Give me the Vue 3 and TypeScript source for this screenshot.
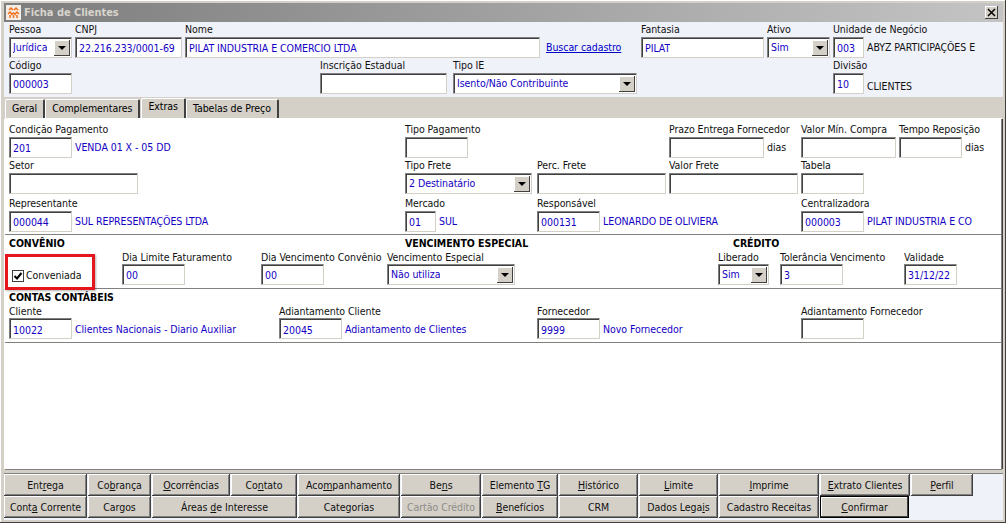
<script setup lang="ts">
interface Field { label?: string; w?: number; value?: string; combo?: boolean; note?: string; blue?: boolean; link?: boolean; low?: boolean; check?: boolean }
interface Row { cls: string; fields: Field[] }
interface Btn { a: string; u?: string; b?: string; off?: boolean; def?: boolean }

const headerRows: Row[] = [
  { cls: 'h1', fields: [
    { label: 'Pessoa', w: 63, value: 'Jurídica', combo: true },
    { label: 'CNPJ', w: 107, value: '22.216.233/0001-69' },
    { label: 'Nome', w: 355, value: 'PILAT INDUSTRIA E COMERCIO LTDA' },
    { note: 'Buscar cadastro', link: true },
    { label: 'Fantasia', w: 123, value: 'PILAT' },
    { label: 'Ativo', w: 63, value: 'Sim', combo: true },
    { label: 'Unidade de Negócio', w: 31, value: '003', note: 'ABYZ PARTICIPAÇÕES E' },
  ] },
  { cls: 'h2', fields: [
    { label: 'Código', w: 63, value: '000003' },
    { label: 'Inscrição Estadual', w: 127, value: '' },
    { label: 'Tipo IE', w: 184, value: 'Isento/Não Contribuinte', combo: true },
    { label: 'Divisão', w: 31, value: '10', note: 'CLIENTES', low: true },
  ] },
]

const rowsTop: Row[] = [
  { cls: 'p1', fields: [
    { label: 'Condição Pagamento', w: 63, value: '201', note: 'VENDA 01 X - 05 DD', blue: true },
    { label: 'Tipo Pagamento', w: 63, value: '' },
    { label: 'Prazo Entrega Fornecedor', w: 95, value: '', note: 'dias' },
    { label: 'Valor Mín. Compra', w: 95, value: '' },
    { label: 'Tempo Reposição', w: 63, value: '', note: 'dias' },
  ] },
  { cls: 'p2', fields: [
    { label: 'Setor', w: 129, value: '' },
    { label: 'Tipo Frete', w: 127, value: '2 Destinatário', combo: true },
    { label: 'Perc. Frete', w: 129, value: '' },
    { label: 'Valor Frete', w: 129, value: '' },
    { label: 'Tabela', w: 63, value: '' },
  ] },
  { cls: 'p3', fields: [
    { label: 'Representante', w: 63, value: '000044', note: 'SUL REPRESENTAÇÕES LTDA', blue: true },
    { label: 'Mercado', w: 31, value: '01', note: 'SUL', blue: true },
    { label: 'Responsável', w: 63, value: '000131', note: 'LEONARDO DE OLIVIERA', blue: true },
    { label: 'Centralizadora', w: 63, value: '000003', note: 'PILAT INDUSTRIA E CO', blue: true },
  ] },
]

const convenio: Row = { cls: 'p4', fields: [
  { check: true },
  { label: 'Dia Limite Faturamento', w: 63, value: '00' },
  { label: 'Dia Vencimento Convênio', w: 63, value: '00' },
  { label: 'Vencimento Especial', w: 128, value: 'Não utiliza', combo: true },
  { label: 'Liberado', w: 51, value: 'Sim', combo: true },
  { label: 'Tolerância Vencimento', w: 63, value: '3' },
  { label: 'Validade', w: 53, value: '31/12/22' },
] }

const contas: Row = { cls: 'p5', fields: [
  { label: 'Cliente', w: 63, value: '10022', note: 'Clientes Nacionais - Diario Auxiliar', blue: true },
  { label: 'Adiantamento Cliente', w: 63, value: '20045', note: 'Adiantamento de Clientes', blue: true },
  { label: 'Fornecedor', w: 63, value: '9999', note: 'Novo Fornecedor', blue: true },
  { label: 'Adiantamento Fornecedor', w: 63, value: '' },
] }

const panelRows: Row[][] = [rowsTop, [convenio], [contas]]

const tabs = ['Geral', 'Complementares', 'Extras', 'Tabelas de Preço']

const btn1: Btn[] = [
  { a: 'Ent', u: 'r', b: 'ega' }, { a: 'Co', u: 'b', b: 'rança' }, { a: '', u: 'O', b: 'corrências' },
  { a: 'Co', u: 'n', b: 'tato' }, { a: 'Aco', u: 'm', b: 'panhamento' }, { a: 'Be', u: 'n', b: 's' },
  { a: 'Elemento ', u: 'T', b: 'G' }, { a: '', u: 'H', b: 'istórico' }, { a: '', u: 'L', b: 'imite' },
  { a: '', u: 'I', b: 'mprime' }, { a: '', u: 'E', b: 'xtrato Clientes' }, { a: '', u: 'P', b: 'erfil' },
]
const btn2: Btn[] = [
  { a: 'Cont', u: 'a', b: ' Corrente' }, { a: 'Cargos' }, { a: 'Áreas ', u: 'd', b: 'e Interesse' },
  { a: 'Categorias' }, { a: 'Cartão Crédito', off: true }, { a: '', u: 'B', b: 'enefícios' },
  { a: 'CRM' }, { a: 'Dados Lega', u: 'i', b: 's' }, { a: 'Cadastro Receitas' },
  { a: '', u: 'C', b: 'onfirmar', def: true },
]
const btnRows: { cls: string; items: Btn[] }[] = [
  { cls: 'b1', items: btn1 },
  { cls: 'b2', items: btn2 },
]
</script>

<template>
  <div class="win">
    <div class="title">
      <svg class="logo" width="15" height="15" viewBox="0 0 15 15">
        <rect width="15" height="15" fill="#f4ede6" />
        <path d="M3 5l2-2 2 2M8 5l2-2 2 2M2 9l2-2 2 2M9 9l2-2 2 2M5 10l2.500-2 2.500 2M4 13v-3M7.500 13v-3M11 13v-3" fill="none" stroke="#f0701c" stroke-width="1.500" />
      </svg>
      <span class="title-text">Ficha de Clientes</span>
      <span class="close"><svg width="9" height="9" viewBox="0 0 9 9"><path d="M1 1l7 7M8 1l-7 7" stroke="#000" stroke-width="1.500" /></svg></span>
    </div>

    <div class="header">
      <div v-for="row in headerRows" :key="row.cls" class="row" :class="row.cls">
        <div v-for="(f, i) in row.fields" :key="i" class="field">
          <div class="label">{{ f.label || '&nbsp;' }}</div>
          <div class="line">
            <div v-if="f.w" class="ctl" :class="{ combo: f.combo }" :style="{ width: f.w + 'px' }">
              <span class="val">{{ f.value }}</span>
              <span v-if="f.combo" class="arrow"><i></i></span>
            </div>
            <span v-if="f.note" class="note" :class="{ link: f.link, low: f.low }">{{ f.note }}</span>
          </div>
        </div>
      </div>
    </div>

    <div class="tabs">
      <div v-for="t in tabs" :key="t" class="tab" :class="{ active: t === 'Extras' }">{{ t }}</div>
    </div>

    <div class="panel">
      <div class="section first">
        <div v-for="row in panelRows[0]" :key="row.cls" class="row" :class="row.cls">
          <div v-for="(f, i) in row.fields" :key="i" class="field">
            <div class="label">{{ f.label }}</div>
            <div class="line">
              <div class="ctl" :class="{ combo: f.combo }" :style="{ width: f.w + 'px' }">
                <span class="val">{{ f.value }}</span>
                <span v-if="f.combo" class="arrow"><i></i></span>
              </div>
              <span v-if="f.note" class="note" :class="{ blue: f.blue }">{{ f.note }}</span>
            </div>
          </div>
        </div>
      </div>
      <div class="rule tight"></div>

      <div class="section">
        <div class="heads">
          <b>CONVÊNIO</b>
          <b>VENCIMENTO ESPECIAL</b>
          <b>CRÉDITO</b>
        </div>
        <div v-for="row in panelRows[1]" :key="row.cls" class="row" :class="row.cls">
          <div v-for="(f, i) in row.fields" :key="i" class="field">
            <template v-if="f.check">
              <div class="redbox"></div>
              <div class="label">&nbsp;</div>
              <label class="check">
                <svg width="12" height="12" viewBox="0 0 12 12">
                  <rect x="0.500" y="0.500" width="11" height="11" fill="#fff" stroke="#404040" />
                  <path d="M2.500 6l2.500 2.500 4.500-5.500" fill="none" stroke="#000" stroke-width="2" />
                </svg>
                <span>Conveniada</span>
              </label>
            </template>
            <template v-else>
              <div class="label">{{ f.label }}</div>
              <div class="line">
                <div class="ctl" :class="{ combo: f.combo }" :style="{ width: f.w + 'px' }">
                  <span class="val">{{ f.value }}</span>
                  <span v-if="f.combo" class="arrow"><i></i></span>
                </div>
              </div>
            </template>
          </div>
        </div>
      </div>
      <div class="rule"></div>

      <div class="section">
        <div class="heads single"><b>CONTAS CONTÁBEIS</b></div>
        <div v-for="row in panelRows[2]" :key="row.cls" class="row" :class="row.cls">
          <div v-for="(f, i) in row.fields" :key="i" class="field">
            <div class="label">{{ f.label }}</div>
            <div class="line">
              <div class="ctl" :style="{ width: f.w + 'px' }">
                <span class="val">{{ f.value }}</span>
              </div>
              <span v-if="f.note" class="note" :class="{ blue: f.blue }">{{ f.note }}</span>
            </div>
          </div>
        </div>
      </div>
      <div class="rule"></div>
    </div>

    <div class="buttons">
      <div v-for="r in btnRows" :key="r.cls" class="btn-row" :class="r.cls">
        <div v-for="(b, i) in r.items" :key="i" class="btn" :class="{ off: b.off, def: b.def }">
          <span>{{ b.a }}<u v-if="b.u">{{ b.u }}</u>{{ b.b }}</span>
        </div>
      </div>
    </div>
  </div>
</template>

<style>
html, body { margin: 0; background: #d4d0c8; overflow: hidden; }
</style>

<style scoped>
.win {
  box-sizing: border-box;
  width: 1006px;
  height: 523px;
  display: flex;
  flex-direction: column;
  padding: 3px 3px 3px 4px;
  background: #d4d0c8;
  box-shadow: inset -1px -1px #404040, inset 1px 1px #fff;
  font: 10.5px/13px "DejaVu Sans Condensed", "DejaVu Sans", sans-serif;
  letter-spacing: -0.05px;
  color: #000;
}
.title {
  height: 19px;
  flex: none;
  display: flex;
  align-items: center;
  gap: 3px;
  padding: 0 5px 0 2px;
  background: linear-gradient(90deg, #7d7d7d, #c4c4c4);
}
.title-text {
  font-weight: 700;
  font-size: 11px;
  color: #d8d4cc;
}
.close {
  margin-left: auto;
  box-sizing: border-box;
  width: 13px;
  height: 13px;
  display: flex;
  align-items: center;
  justify-content: center;
  background: #d4d0c8;
  box-shadow: inset -1px -1px #404040, inset 1px 1px #fff;
}
.header {
  flex: none;
  height: 74px;
  background: #f0f2f9;
  padding: 1px 0 0 5px;
}
.row { display: grid; }
.header .row + .row { margin-top: 1px; }
.h1 { grid-template-columns: 66px 110px 361px 95px 126px 66px 1fr; }
.h2 { grid-template-columns: 311px 133px 380px 1fr; }
.p1 { grid-template-columns: 396px 264px 132px 98px 1fr; }
.p2 { grid-template-columns: 396px 132px 132px 132px 1fr; margin-top: 1px; }
.p3 { grid-template-columns: 396px 132px 264px 1fr; margin-top: 3px; }
.p4 { grid-template-columns: 113px 139px 126px 331px 62px 124px 1fr; }
.p5 { grid-template-columns: 270px 258px 264px 1fr; }
.field { position: relative; min-width: 0; }
.label { height: 14px; white-space: nowrap; color: #111; }
.p4 .label, .p5 .label { box-sizing: border-box; padding-top: 1px; }
.line {
  display: flex;
  align-items: center;
  gap: 3px;
  height: 21px;
  white-space: nowrap;
}
.ctl {
  box-sizing: border-box;
  height: 21px;
  flex: none;
  display: flex;
  align-items: center;
  justify-content: space-between;
  padding: 1px 1px 0 3px;
  background: #fff;
  border: 1px solid;
  border-color: #808080 #d4d0c8 #d4d0c8 #808080;
  box-shadow: inset 1px 1px #404040;
  color: #1400c4;
}
.ctl.combo { padding-top: 0; }
.p5 .ctl { padding-top: 3px; }
.p5 .note { padding-top: 2px; }
.val { white-space: nowrap; overflow: hidden; }
.arrow {
  box-sizing: border-box;
  width: 16px;
  height: 16px;
  flex: none;
  display: flex;
  align-items: center;
  justify-content: center;
  background: #d4d0c8;
  box-shadow: inset -1px -1px #404040, inset 1px 1px #fff;
}
.arrow i {
  width: 0;
  height: 0;
  border-left: 4px solid transparent;
  border-right: 4px solid transparent;
  border-top: 4px solid #000;
}
.note { color: #111; }
.note.blue { color: #1400c4; }
.note.link { color: #0000c8; text-decoration: underline; }
.note.low { position: relative; top: 3px; }
.tabs {
  flex: none;
  height: 22px;
  display: flex;
  align-items: flex-end;
  padding-left: 1px;
  background: #d4d0c8;
}
.tab {
  box-sizing: border-box;
  height: 19px;
  padding: 2px 6px 0;
  background: #d4d0c8;
  border-top: 1px solid #fff;
  border-left: 1px solid #fff;
  border-right: 2px solid #404040;
  border-radius: 2px 2px 0 0;
  margin-bottom: 1px;
  white-space: nowrap;
}
.tab.active {
  height: 21px;
  padding-top: 1px;
  margin: 0 0 0 1px;
}
.panel {
  flex: 1;
  min-height: 0;
  box-sizing: border-box;
  margin: 0 1px 4px 1px;
  background: #fff;
  padding-top: 4px;
  border-right: 1px solid #808080;
  box-shadow: 1px 0 #404040, -1px 0 #fff, 0 1px #808080, 0 -1px #fff;
}
.section { padding-left: 4px; }
.rule {
  height: 1px;
  margin-top: 3px;
  background: #808080;
}
.rule.tight { margin-top: 2px; }
.rule + .section { padding-top: 2px; }
.heads {
  display: grid;
  grid-template-columns: 396px 328px 1fr;
  height: 13px;
  line-height: 13px;
  color: #000;
}
.redbox {
  position: absolute;
  left: -4px;
  top: 4px;
  box-sizing: border-box;
  width: 90px;
  height: 36px;
  border: 3px solid #e5161c;
  box-shadow: 1px 1px 2px rgba(0, 0, 0, .3);
}
.check {
  display: flex;
  align-items: center;
  gap: 2px;
  height: 21px;
  padding: 2px 0 0 3px;
  box-sizing: border-box;
  color: #111;
}
.buttons {
  flex: none;
  height: 47px;
  background: #f0f2f9;
  box-sizing: border-box;
  border-top: 1px solid #808080;
}
.btn-row { display: grid; height: 22px; gap: 1px; }
.b1 { grid-template-columns: 83px 63px 78px 66px 102px 80px 76px 79px 79px 100px 90px 62px; }
.b2 { grid-template-columns: 83px 63px 145px 102px 80px 76px 79px 79px 100px 89px; }
.btn {
  display: flex;
  align-items: center;
  justify-content: center;
  padding-top: 1px;
  box-sizing: border-box;
  background: #d4d0c8;
  box-shadow: inset -1px -1px #404040, inset 1px 1px #fff, inset -2px -2px #808080;
  white-space: nowrap;
  color: #111;
}
.btn.off { color: #8f8c86; }
.btn.def {
  box-shadow: inset 0 0 0 1px #000, inset -2px -2px #404040, inset 2px 2px #fff;
}
</style>
